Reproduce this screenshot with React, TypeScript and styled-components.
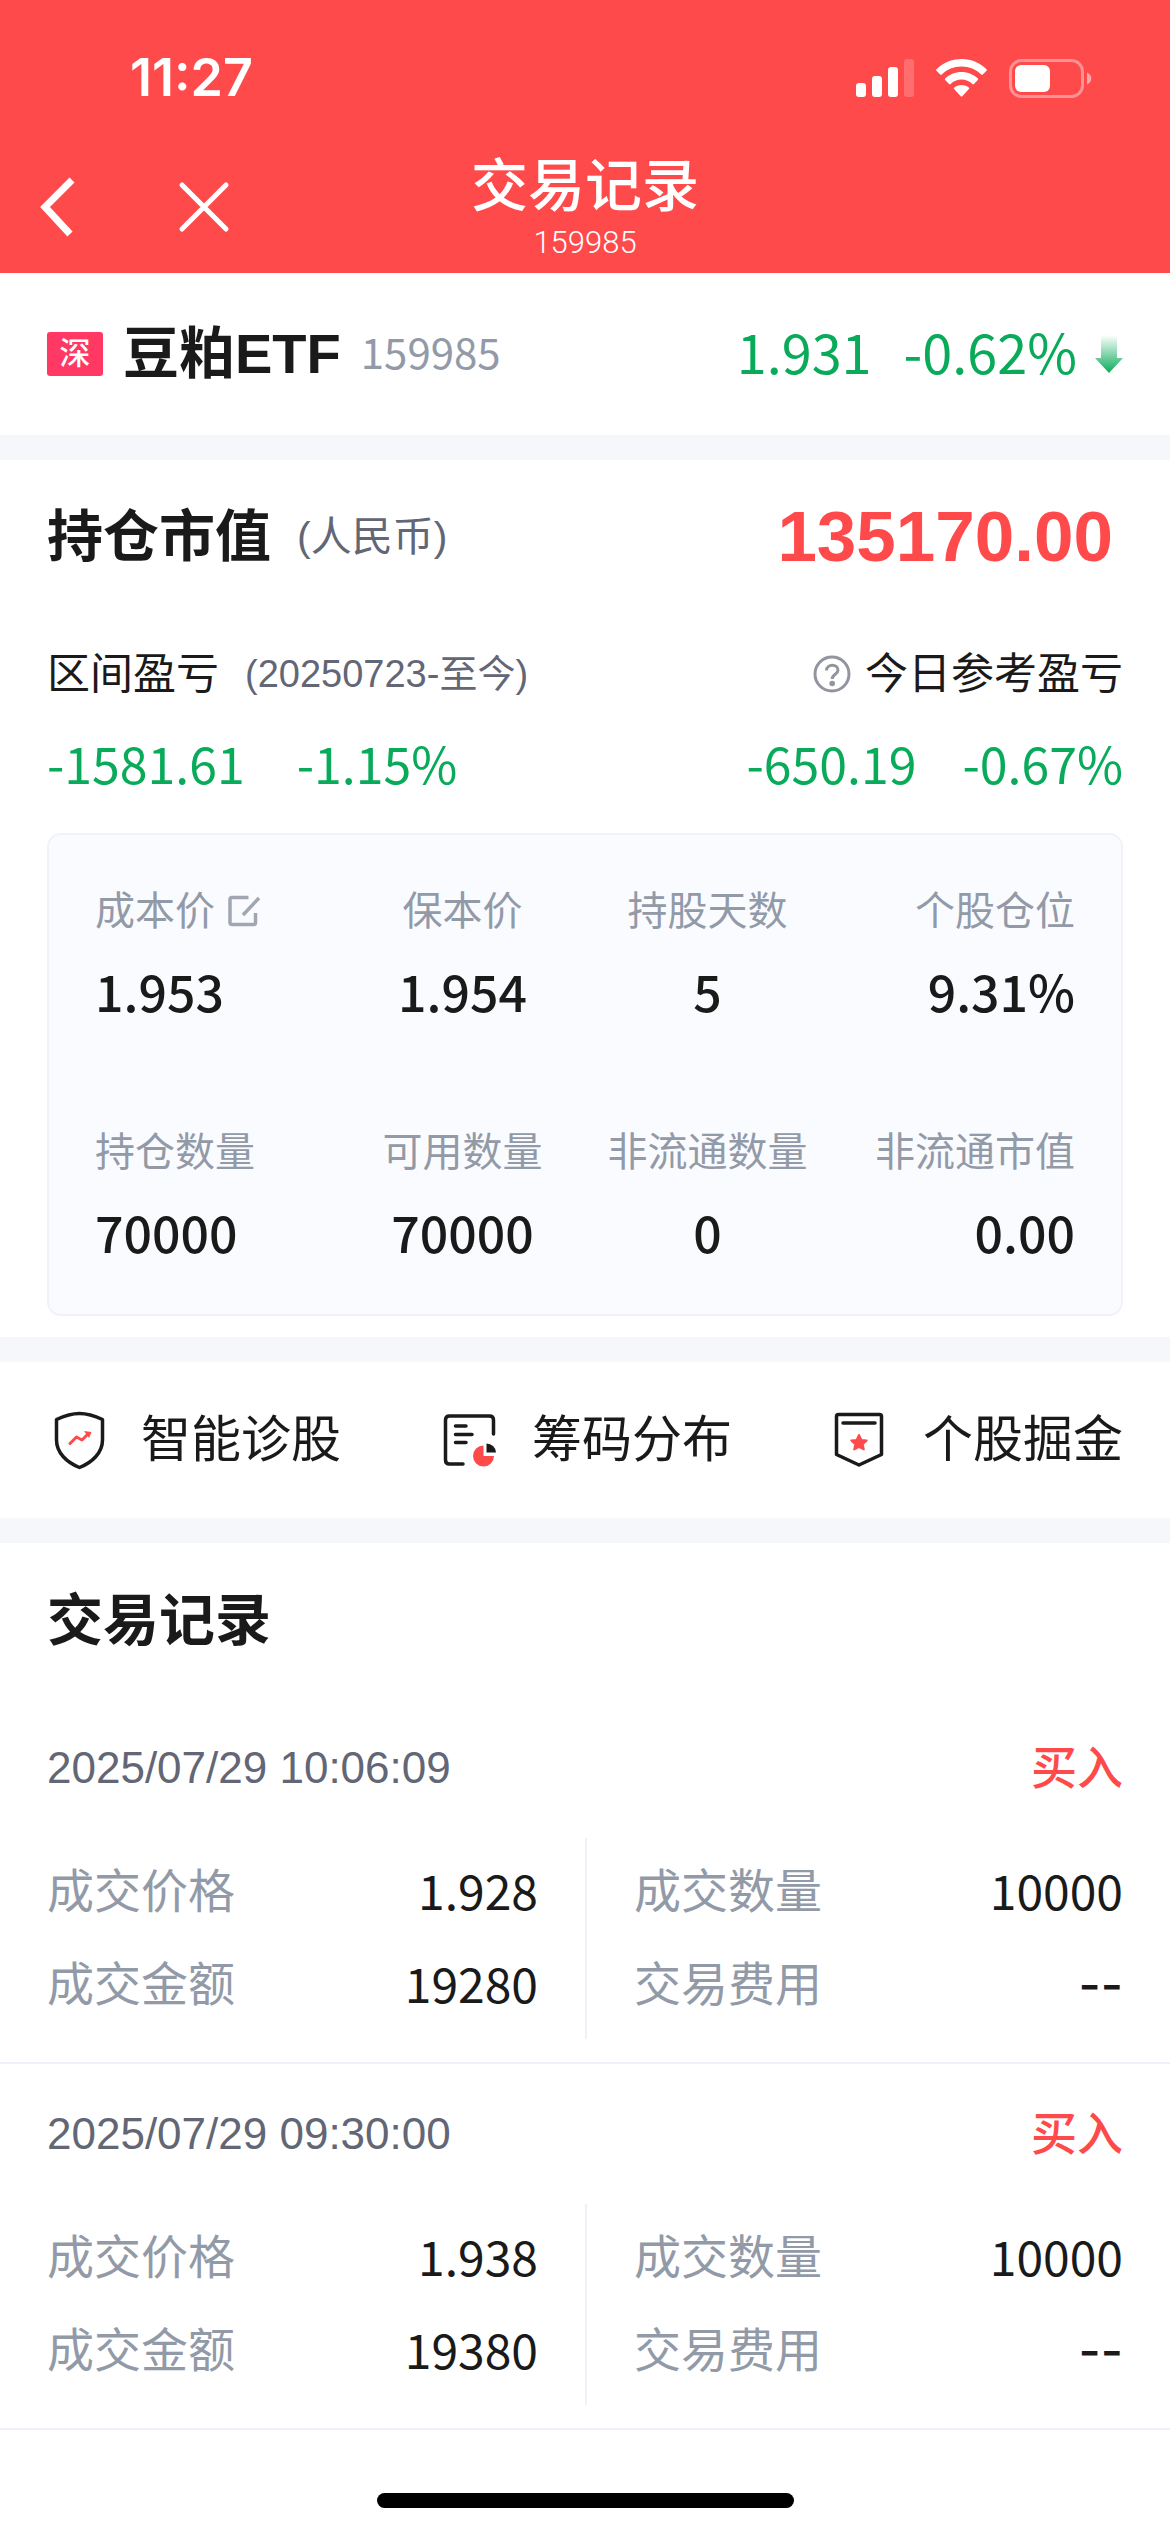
import React from "react";
import styled, { createGlobalStyle } from "styled-components";

const color = {
  red: "#ff4a4b",
  green: "#09ab5a",
  ink: "#1a1a1a",
  slate: "#626675",
  muted: "#929aa8",
  line: "#eef1f7",
  gap: "#f6f7fa",
};

const text = `"Liberation Sans", "Noto Sans CJK SC", sans-serif`;
const figures = `"Noto Sans CJK SC", sans-serif`;

const GlobalStyle = createGlobalStyle`
  * { box-sizing: border-box; }
  body { margin: 0; background: #fff; color: ${color.ink}; font-family: ${text}; }
  h1, h2, p, dl, dd, dt, ul { margin: 0; padding: 0; }
  ul { list-style: none; }
  button { border: 0; padding: 0; background: none; color: inherit; font: inherit; cursor: pointer; }
  svg { display: block; }
`;

const Page = styled.div`
  min-height: 100vh;
  display: flex;
  flex-direction: column;
`;

const Header = styled.header`
  background: ${color.red};
  color: #fff;
`;

const StatusBar = styled.div`
  height: 156px;
  padding: 0 78px 0 130px;
  display: flex;
  align-items: center;
  justify-content: space-between;
`;

const Clock = styled.time`
  font-family: Inter, sans-serif;
  font-size: 52px;
  font-weight: 600;
  line-height: 60px;
`;

const StatusIcons = styled.div`
  display: flex;
  align-items: center;
  gap: 22px;
`;

const NavBar = styled.nav`
  height: 117px;
  display: grid;
  grid-template-columns: 1fr auto 1fr;
`;

const NavActions = styled.div`
  display: flex;
  align-items: center;
  gap: 102px;
  height: 102px;
  padding-left: 38px;
`;

const NavTitle = styled.div`
  text-align: center;
`;

const Title = styled.h1`
  font-size: 57px;
  font-weight: 500;
  line-height: 60px;
`;

const Subtitle = styled.p`
  font-family: Roboto, sans-serif;
  font-size: 31px;
  font-weight: 300;
  line-height: 54px;
`;

const Section = styled.section`
  padding: 0 47px;
`;

const Divider = styled.div`
  height: 25px;
  background: ${color.gap};
`;

const Bar = styled.div<{ $height: number }>`
  display: flex;
  align-items: center;
  justify-content: space-between;
  height: ${(p) => p.$height}px;
`;

const Group = styled.div<{ $gap: number }>`
  display: flex;
  align-items: center;
  gap: ${(p) => p.$gap}px;
`;

const MarketBadge = styled.span`
  width: 56px;
  height: 44px;
  border-radius: 3px;
  background: #ff3864;
  color: #fff;
  font-size: 31px;
  font-weight: 500;
  line-height: 44px;
  text-align: center;
`;

const Heading = styled.h2`
  font-size: 56px;
  font-weight: 700;
  line-height: 80px;
`;

const Code = styled.span`
  padding-bottom: 6px;
  color: ${color.muted};
  font-family: ${figures};
  font-size: 42px;
  line-height: 60px;
`;

const Quote = styled.span`
  padding-bottom: 6px;
  color: ${color.green};
  font-family: ${figures};
  font-size: 54px;
  line-height: 80px;
`;

const Currency = styled.span`
  color: ${color.slate};
  font-size: 41px;
  line-height: 60px;
`;

const Total = styled.strong`
  padding-right: 10px;
  color: ${color.red};
  font-size: 71px;
  line-height: 80px;
`;

const ProfitRow = styled.div`
  display: flex;
  justify-content: space-between;
  padding: 30px 0 41px;
`;

const Profit = styled.div<{ $end?: boolean }>`
  display: flex;
  flex-direction: column;
  align-items: ${(p) => (p.$end ? "flex-end" : "flex-start")};
  gap: 28px;
`;

const ProfitLabel = styled.span`
  font-size: 43px;
  line-height: 60px;
`;

const Range = styled.span`
  color: ${color.slate};
  font-size: 38px;
  line-height: 60px;
`;

const ProfitValue = styled.span`
  color: ${color.green};
  font-family: ${figures};
  font-size: 50px;
  line-height: 60px;
`;

const Card = styled.dl`
  display: grid;
  grid-template-columns: repeat(4, 1fr);
  row-gap: 92px;
  padding: 46px 46px 43px;
  border: 2px solid #eff3f9;
  border-radius: 14px;
  background: #fafbff;
`;

const Cell = styled.div`
  display: flex;
  flex-direction: column;
  align-items: center;
  gap: 9px;
  white-space: nowrap;

  &:nth-child(4n + 1) { align-items: flex-start; }
  &:nth-child(4n) { align-items: flex-end; }
`;

const CellLabel = styled.dt`
  display: flex;
  align-items: center;
  gap: 13px;
  color: ${color.muted};
  font-size: 40px;
  line-height: 60px;
`;

const CellValue = styled.dd`
  font-family: ${figures};
  font-size: 50px;
  font-weight: 500;
  line-height: 80px;
`;

const CardFrame = styled.div`
  padding-bottom: 21px;
`;

const Tool = styled.button`
  display: flex;
  align-items: center;
  gap: 30px;
  font-size: 50px;
  line-height: 80px;
`;

const Record = styled.li`
  padding: 0 47px 23px;
  border-bottom: 2px solid ${color.line};
`;

const RecordTime = styled.time`
  color: ${color.slate};
  font-size: 44px;
  line-height: 60px;
`;

const Side = styled.span`
  color: ${color.red};
  font-size: 46px;
  font-weight: 500;
  line-height: 60px;
`;

const Facts = styled.dl`
  display: grid;
  grid-template-columns: 1fr 1fr;
`;

const FactColumn = styled.div`
  padding: 7px 0 8px;

  &:first-child { padding-right: 47px; }

  &:last-child {
    padding-left: 47px;
    border-left: 2px solid ${color.line};
  }
`;

const Fact = styled.div`
  display: flex;
  align-items: center;
  justify-content: space-between;
  height: 93px;
`;

const FactLabel = styled.dt`
  color: ${color.muted};
  font-size: 47px;
  line-height: 60px;
`;

const FactValue = styled.dd<{ $empty: boolean }>`
  padding-bottom: ${(p) => (p.$empty ? 0 : 6)}px;
  font-family: ${(p) => (p.$empty ? "Inter, sans-serif" : figures)};
  font-size: 48px;
  font-weight: ${(p) => (p.$empty ? 500 : 400)};
  line-height: 60px;
`;

const Footer = styled.footer`
  display: flex;
  justify-content: center;
  margin-top: auto;
  padding: 63px 0 24px;
`;

const HomeIndicator = styled.div`
  width: 417px;
  height: 15px;
  border-radius: 8px;
  background: #000;
`;

const SignalIcon = () => (
  <svg width="58" height="38" viewBox="0 0 58 38" fill="#fff" aria-hidden="true">
    <rect x="0" y="24" width="10" height="14" rx="3" />
    <rect x="16" y="17" width="10" height="21" rx="3" />
    <rect x="32" y="8" width="10" height="30" rx="3" />
    <rect x="48" y="0" width="10" height="38" rx="3" opacity="0.2" />
  </svg>
);

const WifiIcon = () => (
  <svg width="51" height="38" viewBox="0 0 51 38" fill="#fff" aria-hidden="true">
    <path d="M25.500 0C35.500 0 44.200 3.900 50.500 10.200Q51.300 11 50.500 11.800L46.800 15.500Q46 16.200 45.200 15.500C40 10.500 33.200 7.600 25.500 7.600S11 10.500 5.800 15.500Q5 16.200 4.200 15.500L.5 11.800Q-.3 11 .5 10.200C6.800 3.900 15.500 0 25.500 0Z" />
    <path d="M25.500 13C31.900 13 37.600 15.500 41.800 19.400Q42.600 20.200 41.800 21L38 24.900Q37.200 25.500 36.400 24.900C33.500 22.200 29.700 20.600 25.500 20.600S17.500 22.200 14.600 24.900Q13.800 25.500 13 24.900L9.200 21Q8.400 20.200 9.200 19.400C13.400 15.500 19.100 13 25.500 13Z" />
    <path d="M25.500 26C28.300 26 30.900 27 32.900 28.600Q33.700 29.300 32.900 30.100L26.300 37.200Q25.500 38 24.700 37.200L18.100 30.100Q17.300 29.300 18.100 28.600C20.100 27 22.700 26 25.500 26Z" />
  </svg>
);

const BatteryIcon = () => (
  <svg width="83" height="39" viewBox="0 0 83 39" aria-hidden="true">
    <rect x="1.500" y="1.500" width="72" height="36" rx="11" fill="none" stroke="#fff" strokeOpacity="0.4" strokeWidth="3" />
    <rect x="6" y="6" width="35" height="27" rx="6" fill="#fff" />
    <path d="M78 13.500C80.500 14.500 82.300 16.800 82.300 19.500S80.500 24.500 78 25.500Z" fill="#fff" opacity="0.5" />
  </svg>
);

const BackIcon = () => (
  <svg width="38" height="60" viewBox="0 0 38 60" fill="none" stroke="#fff" strokeWidth="7" aria-hidden="true">
    <path d="M34 3L7 30L32 57" />
  </svg>
);

const CloseIcon = () => (
  <svg width="52" height="52" viewBox="0 0 52 52" fill="none" stroke="#fff" strokeWidth="5" strokeLinecap="round" aria-hidden="true">
    <path d="M4 4L48 48M48 4L4 48" />
  </svg>
);

const DownArrow = () => (
  <svg width="28" height="38" viewBox="0 0 28 38" aria-hidden="true">
    <defs>
      <linearGradient id="fall" x1="0" y1="0" x2="0" y2="1">
        <stop offset="0" stopColor={color.green} stopOpacity="0" />
        <stop offset="1" stopColor={color.green} />
      </linearGradient>
    </defs>
    <path d="M6 0H22V23H28L14 38L0 23H6Z" fill="url(#fall)" />
  </svg>
);

const HelpIcon = () => (
  <svg width="38" height="38" viewBox="0 0 38 38" fill="none" stroke="#92959f" strokeWidth="3" aria-hidden="true">
    <circle cx="19" cy="19" r="17" />
    <path d="M13.500 15.500C13.500 8.500 25 8.500 25 15.200C25 19.300 19.200 19.300 19.200 24" />
    <circle cx="19.200" cy="28.500" r="2.800" fill="#92959f" stroke="none" />
  </svg>
);

const EditIcon = () => (
  <svg width="32" height="32" viewBox="0 0 32 32" fill="none" stroke="#a0a7b3" strokeWidth="3.500" aria-hidden="true">
    <path d="M20.500 2.500H4Q2 2.500 2 4.500V27.500Q2 29.500 4 29.500H25.500Q27.500 29.500 27.500 27.500V18" />
    <path d="M15 20L31 3" />
  </svg>
);

const DiagnoseIcon = () => (
  <svg width="64" height="64" viewBox="0 0 64 64" fill="none" strokeWidth="3.500" strokeLinejoin="round" aria-hidden="true">
    <path d="M32.500 5.500C40 5.500 48 8 55.500 11.500V32C55.500 45 45 54.500 32.500 59.500C20 54.500 9.500 45 9.500 32V11.500C17 8 25 5.500 32.500 5.500Z" stroke={color.ink} />
    <path d="M23 35.500L29.500 29L35 32L41 26" stroke={color.red} strokeWidth="3" strokeLinecap="round" />
    <path d="M37 23L44.500 24L42 30Z" fill={color.red} />
  </svg>
);

const ChipsIcon = () => (
  <svg width="64" height="64" viewBox="0 0 64 64" fill="none" stroke={color.ink} strokeWidth="3.500" strokeLinecap="round" aria-hidden="true">
    <path d="M55.500 26V12Q55.500 8 51.500 8H11.500Q7.500 8 7.500 12V52Q7.500 56 11.500 56H25" />
    <path d="M17.500 18H28M17.500 26.500H34M17.500 34.500H28" />
    <path d="M45.500 37.500A10.500 10.500 0 1 0 56 48H45.500Z" fill={color.red} stroke="none" />
    <path d="M48.500 35.500A9.500 9.500 0 0 1 58 44.500H48.500Z" fill={color.ink} stroke="none" />
  </svg>
);

const ProspectIcon = () => (
  <svg width="64" height="64" viewBox="0 0 64 64" fill="none" stroke={color.ink} strokeWidth="3.500" strokeLinejoin="round" aria-hidden="true">
    <path d="M9.500 6.500H50.500Q52.500 6.500 52.500 8.500V46.500L30 57L7.500 46.500V8.500Q7.500 6.500 9.500 6.500Z" />
    <path d="M14 15H46" strokeLinecap="round" />
    <path d="M30 27L32.300 31.900L37.700 32.500L33.700 36.200L34.800 41.500L30 38.800L25.200 41.500L26.300 36.200L22.300 32.500L27.700 31.900Z" fill={color.red} stroke={color.red} strokeWidth="2" />
  </svg>
);

const holdings = [
  { label: "成本价", value: "1.953", editable: true },
  { label: "保本价", value: "1.954" },
  { label: "持股天数", value: "5" },
  { label: "个股仓位", value: "9.31%" },
  { label: "持仓数量", value: "70000" },
  { label: "可用数量", value: "70000" },
  { label: "非流通数量", value: "0" },
  { label: "非流通市值", value: "0.00" },
];

const tools = [
  { label: "智能诊股", Icon: DiagnoseIcon },
  { label: "筹码分布", Icon: ChipsIcon },
  { label: "个股掘金", Icon: ProspectIcon },
];

const records = [
  { time: "2025/07/29 10:06:09", side: "买入", price: "1.928", amount: "19280", count: "10000", fee: "--" },
  { time: "2025/07/29 09:30:00", side: "买入", price: "1.938", amount: "19380", count: "10000", fee: "--" },
];

const FactRow = ({ label, value }: { label: string; value: string }) => (
  <Fact>
    <FactLabel>{label}</FactLabel>
    <FactValue $empty={value === "--"}>{value}</FactValue>
  </Fact>
);

export default function App() {
  return (
    <Page>
      <GlobalStyle />
      <Header>
        <StatusBar>
          <Clock>11:27</Clock>
          <StatusIcons>
            <SignalIcon />
            <WifiIcon />
            <BatteryIcon />
          </StatusIcons>
        </StatusBar>
        <NavBar>
          <NavActions>
            <button type="button" aria-label="返回"><BackIcon /></button>
            <button type="button" aria-label="关闭"><CloseIcon /></button>
          </NavActions>
          <NavTitle>
            <Title>交易记录</Title>
            <Subtitle>159985</Subtitle>
          </NavTitle>
        </NavBar>
      </Header>

      <main>
        <Section>
          <Bar $height={162}>
            <Group $gap={20}>
              <MarketBadge>深</MarketBadge>
              <Heading>豆粕ETF</Heading>
              <Code>159985</Code>
            </Group>
            <Group $gap={32}>
              <Quote>1.931</Quote>
              <Group $gap={18}>
                <Quote>-0.62%</Quote>
                <DownArrow />
              </Group>
            </Group>
          </Bar>
        </Section>
        <Divider />

        <Section>
          <Bar $height={154}>
            <Group $gap={26}>
              <Heading>持仓市值</Heading>
              <Currency>(人民币)</Currency>
            </Group>
            <Total>135170.00</Total>
          </Bar>
          <ProfitRow>
            <Profit>
              <Group $gap={26}>
                <ProfitLabel>区间盈亏</ProfitLabel>
                <Range>(20250723-至今)</Range>
              </Group>
              <Group $gap={52}>
                <ProfitValue>-1581.61</ProfitValue>
                <ProfitValue>-1.15%</ProfitValue>
              </Group>
            </Profit>
            <Profit $end>
              <Group $gap={14}>
                <button type="button" aria-label="说明"><HelpIcon /></button>
                <ProfitLabel>今日参考盈亏</ProfitLabel>
              </Group>
              <Group $gap={46}>
                <ProfitValue>-650.19</ProfitValue>
                <ProfitValue>-0.67%</ProfitValue>
              </Group>
            </Profit>
          </ProfitRow>
          <CardFrame>
            <Card>
              {holdings.map((h) => (
                <Cell key={h.label}>
                  <CellLabel>
                    {h.label}
                    {h.editable && <button type="button" aria-label="修改成本价"><EditIcon /></button>}
                  </CellLabel>
                  <CellValue>{h.value}</CellValue>
                </Cell>
              ))}
            </Card>
          </CardFrame>
        </Section>
        <Divider />

        <Section>
          <Bar $height={156}>
            {tools.map(({ label, Icon }) => (
              <Tool key={label} type="button">
                <Icon />
                {label}
              </Tool>
            ))}
          </Bar>
        </Section>
        <Divider />

        <Section>
          <Bar $height={155}>
            <Heading>交易记录</Heading>
          </Bar>
        </Section>
        <ul>
          {records.map((r) => (
            <Record key={r.time}>
              <Bar $height={140}>
                <RecordTime>{r.time}</RecordTime>
                <Side>{r.side}</Side>
              </Bar>
              <Facts>
                <FactColumn>
                  <FactRow label="成交价格" value={r.price} />
                  <FactRow label="成交金额" value={r.amount} />
                </FactColumn>
                <FactColumn>
                  <FactRow label="成交数量" value={r.count} />
                  <FactRow label="交易费用" value={r.fee} />
                </FactColumn>
              </Facts>
            </Record>
          ))}
        </ul>
      </main>

      <Footer>
        <HomeIndicator />
      </Footer>
    </Page>
  );
}
